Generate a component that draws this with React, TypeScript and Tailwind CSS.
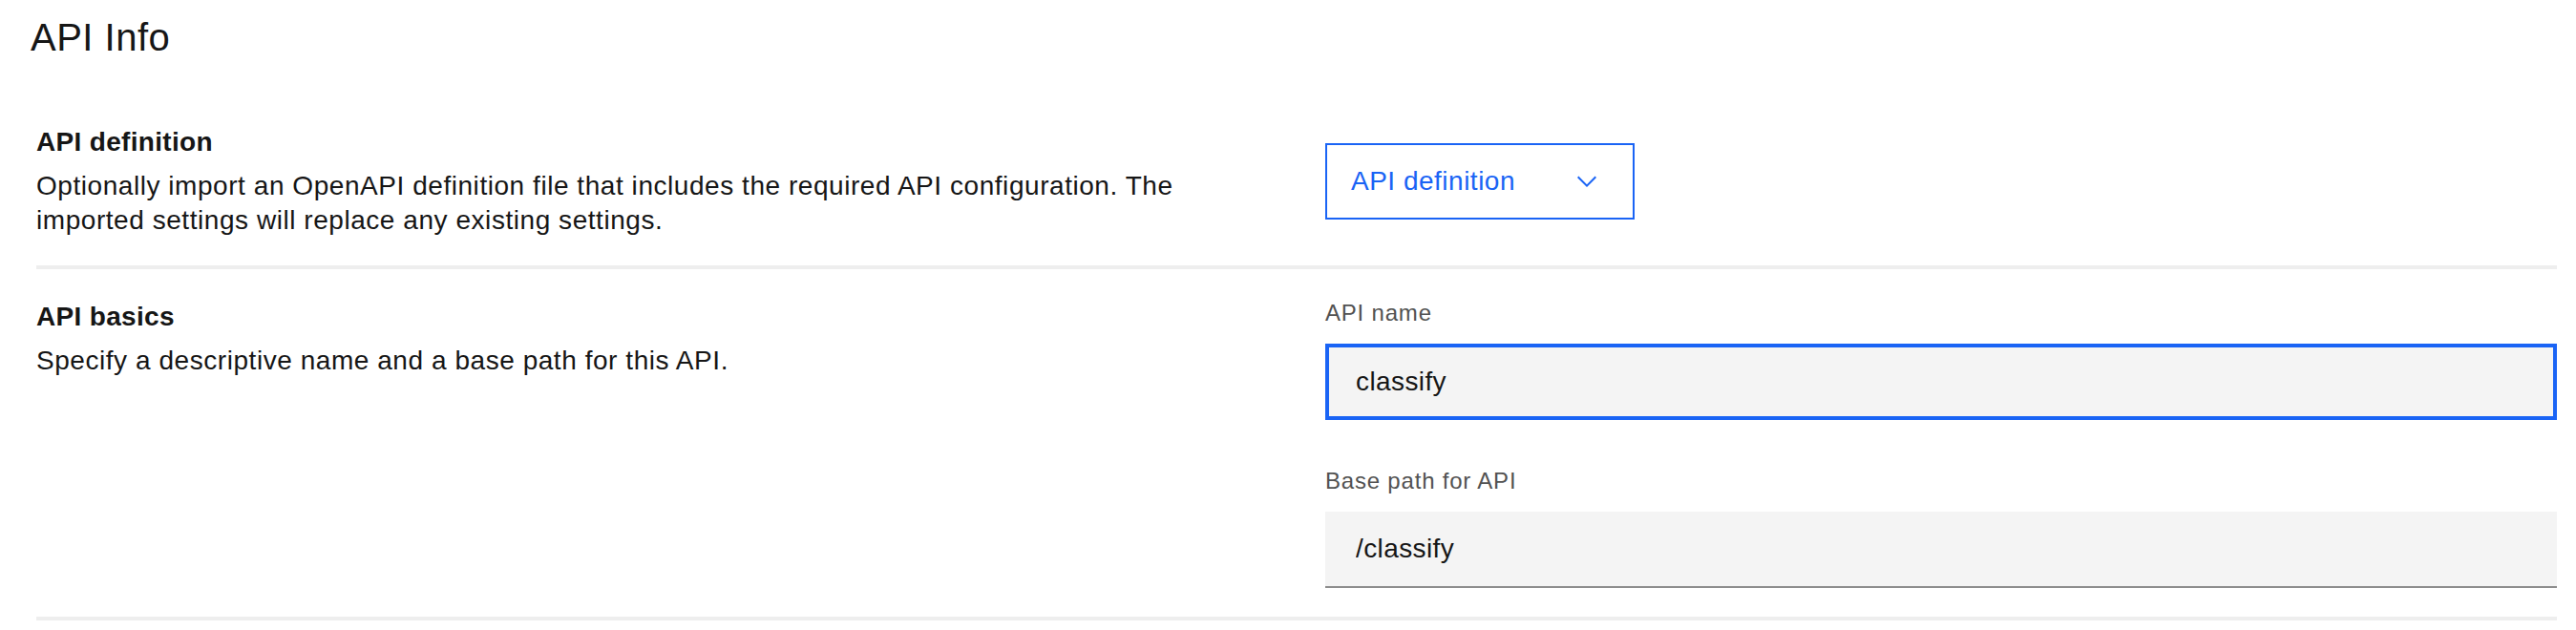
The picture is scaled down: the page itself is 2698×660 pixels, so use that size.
import React from "react";

const ChevronDown: React.FC = () => (
  <svg width="32" height="32" viewBox="0 0 16 16" fill="currentColor" aria-hidden="true">
    <path d="M8 11L3 6 3.7 5.3 8 9.6 12.3 5.3 13 6z" />
  </svg>
);

interface SectionProps {
  title: string;
  description: React.ReactNode;
  children: React.ReactNode;
  className?: string;
}

const Section: React.FC<SectionProps> = ({ title, description, children, className = "" }) => (
  <section className={`grid grid-cols-[1290px_1290px] gap-x-[60px] border-b-4 border-[#eeeeee] ${className}`}>
    <div>
      <h3 className="text-[28px] font-semibold leading-[40px] tracking-[0.32px] text-[#161616]">{title}</h3>
      <p className="mt-[8px] max-w-[1260px] text-[28px] leading-[36px] tracking-[0.55px] text-[#161616]">
        {description}
      </p>
    </div>
    <div>{children}</div>
  </section>
);

const TextField: React.FC<{ label: string; value: string; focused?: boolean; className?: string }> = ({
  label,
  value,
  focused = false,
  className = "",
}) => (
  <div className={className}>
    <label className="mb-[16px] block text-[24px] leading-[32px] tracking-[0.8px] text-[#525252]">{label}</label>
    <input
      readOnly
      defaultValue={value}
      className={`block h-[80px] w-full bg-[#f4f4f4] font-['Liberation_Sans',Arial,sans-serif] text-[28px] tracking-[0.4px] text-[#161616] outline-none ${
        focused ? "border-4 border-[#1a64f5] px-[28px]" : "border-b-2 border-[#8d8d8d] px-[32px]"
      }`}
    />
  </div>
);

export default function App() {
  return (
    <div className="min-h-[660px] bg-white font-['Liberation_Sans',Arial,sans-serif] text-[#161616]">
      <h1 className="pl-[32px] pt-[11px] text-[40px] font-normal leading-[56px] tracking-[0.5px]">API Info</h1>

      <div className="mt-[33px] pl-[38px] pr-[20px]">
        <Section
          title="API definition"
          description="Optionally import an OpenAPI definition file that includes the required API configuration. The imported settings will replace any existing settings."
          className="pt-[29px] pb-[29px]"
        >
          <button
            type="button"
            className="mt-[21px] flex h-[80px] w-[324px] items-center justify-between border-2 border-[#1a64f5] bg-white pl-[25px] pr-[32px] text-[28px] tracking-[0.5px] text-[#1a64f5]"
          >
            <span>API definition</span>
            <ChevronDown />
          </button>
        </Section>

        <Section
          title="API basics"
          description="Specify a descriptive name and a base path for this API."
          className="pt-[30px] pb-[30px]"
        >
          <TextField label="API name" value="classify" focused />
          <TextField label="Base path for API" value="/classify" className="mt-[48px]" />
        </Section>
      </div>
    </div>
  );
}
